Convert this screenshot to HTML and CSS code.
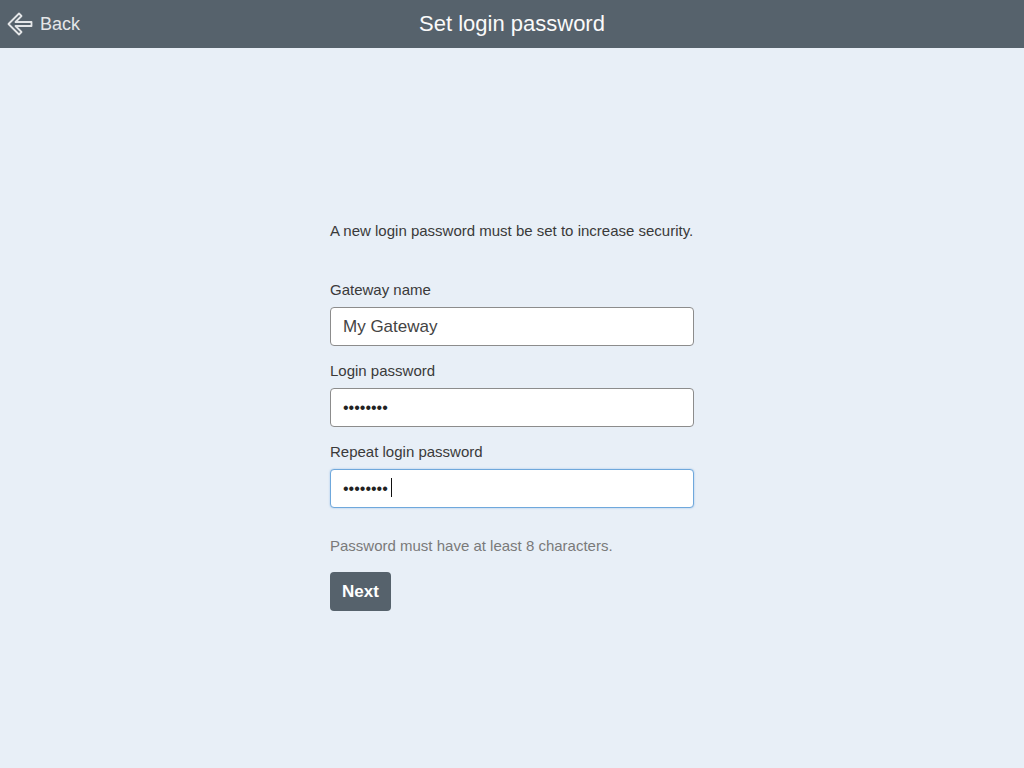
FILE: index.html
```html
<!DOCTYPE html>
<html>
<head>
<meta charset="utf-8">
<link rel="stylesheet" href="styles.css">
</head>
<body>
<header class="topbar">
  <a class="back">
    <svg class="back-icon" width="26" height="26" viewBox="0 0 26 26">
      <path d="M1.5 13 L12 2.5 L14.5 5 L8.5 11 L24.5 11 L24.5 15 L8.5 15 L14.5 21 L12 23.5 Z" fill="none" stroke="#e4e6e8" stroke-width="1.8" stroke-linejoin="round"/>
    </svg>
    <span>Back</span>
  </a>
  <h1 class="title">Set login password</h1>
</header>
<main class="content">
  <form class="form">
    <p class="intro">A new login password must be set to increase security.</p>
    <label class="label">Gateway name</label>
    <input class="field" type="text" value="My Gateway">
    <label class="label">Login password</label>
    <input class="field pw" type="password" value="12345678">
    <label class="label">Repeat login password</label>
    <div class="field-wrap">
      <input class="field pw focused" type="password" value="12345678">
      <span class="caret"></span>
    </div>
    <p class="hint">Password must have at least 8 characters.</p>
    <button class="next" type="button">Next</button>
  </form>
</main>
</body>
</html>
```
FILE: styles.css
```css
html, body {
  margin: 0;
  padding: 0;
}
body {
  background: #e8eff7;
  font-family: "Liberation Sans", Arial, sans-serif;
  color: #333;
  height: 768px;
}
.topbar {
  height: 48px;
  background: #56626c;
  display: flex;
  align-items: center;
  justify-content: center;
  position: relative;
}
.back {
  position: absolute;
  left: 7px;
  top: 11px;
  display: flex;
  align-items: center;
  gap: 7px;
  color: #e4e6e8;
  font-size: 18px;
}
.back-icon {
  display: block;
}
.title {
  margin: 0;
  font-weight: normal;
  font-size: 22px;
  color: #fafafa;
}
.content {
  display: flex;
  justify-content: center;
  padding-top: 173px;
}
.form {
  width: 364px;
  display: flex;
  flex-direction: column;
}
.intro {
  margin: 0 0 39px;
  font-size: 15px;
  line-height: 20px;
  color: #3a3a3a;
}
.label {
  font-size: 15px;
  line-height: 20px;
  margin-bottom: 7px;
  color: #3a3a3a;
}
.field {
  box-sizing: border-box;
  width: 364px;
  height: 39px;
  border: 1px solid #8c8c8c;
  border-radius: 4px;
  background: #fff;
  padding: 0 12px;
  font-family: "Liberation Sans", Arial, sans-serif;
  font-size: 17px;
  color: #444;
  margin: 0 0 15px;
  outline: none;
}
.field.pw {
  font-size: 16px;
  color: #222;
}
.field-wrap {
  position: relative;
  height: 39px;
}
.field.focused {
  border-color: #6fa8dc;
  box-shadow: 0 0 2px rgba(102, 160, 220, 0.6);
}
.caret {
  position: absolute;
  left: 61px;
  top: 9px;
  width: 1px;
  height: 19px;
  background: #111;
}
.hint {
  margin: 28px 0 16px;
  font-size: 15px;
  line-height: 20px;
  color: #7a7a7a;
}
.next {
  width: 61px;
  height: 39px;
  border: none;
  border-radius: 4px;
  background: #56626c;
  color: #fff;
  font-family: "Liberation Sans", Arial, sans-serif;
  font-size: 17px;
  font-weight: bold;
  padding: 0;
}
```
